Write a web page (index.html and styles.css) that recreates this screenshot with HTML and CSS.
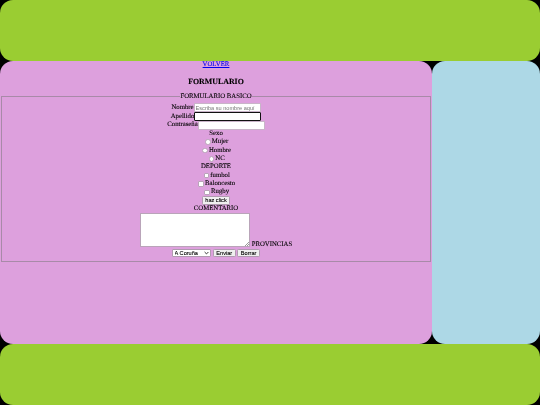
FILE: index.html
```html
<!DOCTYPE html>
<html>
<head>
    <meta charset="UTF-8">
    <title>Formulario</title>
    <link rel="stylesheet" href="styles.css">
</head>
<body>
    <div class="page">
        <header class="top"></header>
        <main class="content">
            <a href="#" class="back">VOLVER</a>
            <h3>FORMULARIO</h3>
            <form>
                <fieldset>
                    <legend>FORMULARIO BASICO</legend>
                    <div class="row input-row">Nombre<input type="text" class="field" placeholder="Escriba su nombre aquí"></div>
                    <div class="row input-row">Apellido<input type="text" class="field focused"></div>
                    <div class="row input-row">Contraseña<input type="password" class="field"></div>
                    <div class="row">Sexo</div>
                    <div class="row"><input type="radio" name="sexo" class="mark round">Mujer</div>
                    <div class="row"><input type="radio" name="sexo" class="mark round">Hombre</div>
                    <div class="row"><input type="radio" name="sexo" class="mark round">NC</div>
                    <div class="row">DEPORTE</div>
                    <div class="row"><input type="checkbox" class="mark">fumbol</div>
                    <div class="row"><input type="checkbox" class="mark">Baloncesto</div>
                    <div class="row"><input type="checkbox" class="mark">Rugby</div>
                    <div class="row"><button type="button" class="btn">haz click</button></div>
                    <div class="row">COMENTARIO</div>
                    <div class="row area-row"><textarea></textarea><span>PROVINCIAS</span></div>
                    <div class="row last-row">
                        <select class="btn pick"><option>A Coruña</option></select>
                        <button type="submit" class="btn">Enviar</button>
                        <button type="reset" class="btn">Borrar</button>
                    </div>
                </fieldset>
            </form>
        </main>
        <aside class="side"></aside>
        <footer class="bottom"></footer>
    </div>
</body>
</html>
```

FILE: styles.css
```css
html, body {
    margin: 0;
    height: 100%;
    background: #000;
}
body {
    font-family: "Liberation Serif", serif;
    font-size: 6.75px;
    line-height: 7.6px;
    color: #000;
    text-rendering: geometricPrecision;
    -webkit-text-stroke: 0.1px;
}
.page {
    display: grid;
    grid-template-columns: 432px 108px;
    grid-template-rows: 61px 283px 61px;
    height: 405px;
    filter: blur(0.25px);
}
.top, .bottom {
    grid-column: 1 / 3;
    background: #9acd32;
    border-radius: 13px;
}
.content {
    background: #dda0dd;
    border-radius: 13px;
    text-align: center;
}
.side {
    background: #add8e6;
    border-radius: 13px;
}
.back {
    color: #0000ee;
    display: block;
}
h3 {
    font-size: 7.9px;
    line-height: 9px;
    margin: 8px 0 7.6px;
}
fieldset {
    margin: 0 1px;
    padding: 2.5px 0 3.5px;
    border: 0.85px solid #a88aa8;
}
legend {
    margin: 0 auto;
    padding: 0 0.85px;
}
.row {
    display: flex;
    justify-content: center;
    align-items: center;
    height: 8.35px;
    white-space: nowrap;
}
.input-row {
    height: 8.8px;
}
.field {
    box-sizing: border-box;
    width: 67px;
    height: 8.6px;
    margin: 0;
    padding: 0 1px;
    border: 0.5px solid #c9b4c9;
    border-radius: 0;
    background: #fff;
    font-family: "Liberation Sans", sans-serif;
    font-size: 5.6px;
    outline: none;
    -webkit-text-stroke: 0;
}
.field::placeholder {
    color: #777;
}
.focused {
    border: 0.85px solid #111;
    border-radius: 1px;
}
.mark {
    appearance: none;
    box-sizing: border-box;
    width: 5.5px;
    height: 5.5px;
    margin: 0 1.3px 0 1.3px;
    border: 0.4px solid #b9a4b9;
    border-radius: 1px;
    background: #fff;
}
.round {
    border-radius: 50%;
}
.btn {
    box-sizing: border-box;
    height: 8.4px;
    margin: 0;
    padding: 0 2.5px;
    border: 0.4px solid #b09ab0;
    border-radius: 1.3px;
    background: #efefef;
    color: #000;
    font-family: "Liberation Sans", sans-serif;
    font-size: 5.6px;
    line-height: 7px;
}
.area-row {
    align-items: flex-start;
    height: 34.5px;
}
.area-row span {
    align-self: flex-end;
    margin-left: 2px;
    line-height: 7px;
}
textarea {
    box-sizing: border-box;
    display: block;
    width: 110px;
    height: 33.6px;
    margin: 0;
    padding: 0;
    border: 0.4px solid #b9a4b9;
    background: #fff;
}
textarea::-webkit-resizer {
    background: linear-gradient(135deg, transparent 50%, #999 50%, #999 60%, transparent 60%, transparent 75%, #999 75%, #999 85%, transparent 85%) right bottom / 4px 4px no-repeat;
}
.last-row {
    gap: 1.7px;
    height: 9px;
    margin-top: 1px;
}
.pick {
    appearance: none;
    width: 39px;
    padding: 0 1.5px;
    border-radius: 1px;
    background: #fff url("data:image/svg+xml,%3Csvg xmlns='http://www.w3.org/2000/svg' width='5' height='4' viewBox='0 0 5 4'%3E%3Cpath d='M0.6 1l1.9 1.9L4.4 1' fill='none' stroke='%23222' stroke-width='0.9'/%3E%3C/svg%3E") right 1px center no-repeat;
}
```
